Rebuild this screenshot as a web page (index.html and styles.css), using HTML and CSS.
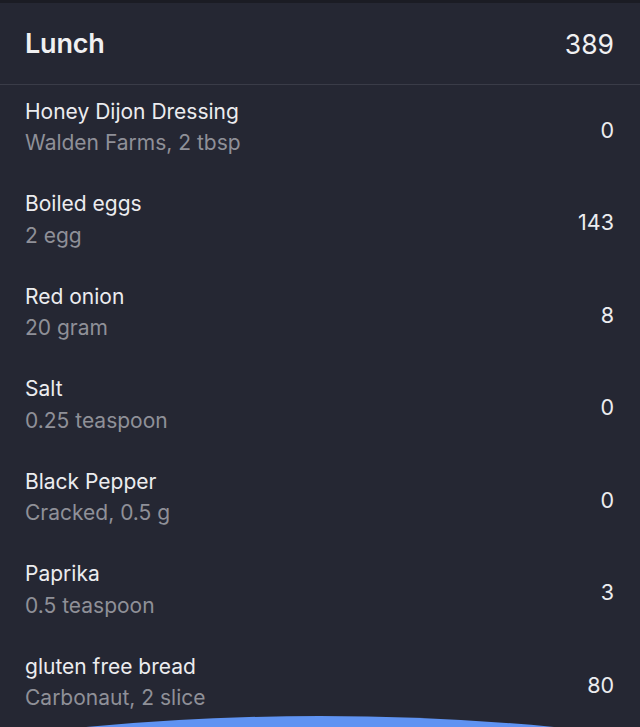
FILE: index.html
```html
<!DOCTYPE html>
<html>
<head>
<meta charset="utf-8">
<link rel="stylesheet" href="styles.css">
</head>
<body>
<div class="screen">
  <div class="topstrip"></div>
  <header class="meal-header">
    <span class="meal-title">Lunch</span>
    <span class="meal-total">389</span>
  </header>
  <ul class="items">
    <li class="item"><div class="info"><div class="name">Honey Dijon Dressing</div><div class="sub">Walden Farms, 2 tbsp</div></div><div class="cal">0</div></li>
    <li class="item"><div class="info"><div class="name">Boiled eggs</div><div class="sub">2 egg</div></div><div class="cal">143</div></li>
    <li class="item"><div class="info"><div class="name">Red onion</div><div class="sub">20 gram</div></div><div class="cal">8</div></li>
    <li class="item"><div class="info"><div class="name">Salt</div><div class="sub">0.25 teaspoon</div></div><div class="cal">0</div></li>
    <li class="item"><div class="info"><div class="name">Black Pepper</div><div class="sub">Cracked, 0.5 g</div></div><div class="cal">0</div></li>
    <li class="item"><div class="info"><div class="name">Paprika</div><div class="sub">0.5 teaspoon</div></div><div class="cal">3</div></li>
    <li class="item"><div class="info"><div class="name">gluten free bread</div><div class="sub">Carbonaut, 2 slice</div></div><div class="cal">80</div></li>
  </ul>
  <svg class="fab-arc" width="640" height="12" viewBox="0 0 640 12"><path d="M86,12 Q320,-10 554,12 Z" fill="#5f93f2"/></svg>
</div>
</body>
</html>
```
FILE: styles.css
```css
* { box-sizing: border-box; }
html, body { margin: 0; padding: 0; background: #252733; }
body { font-family: Inter, "Noto Sans", sans-serif; color: #ececef; }
.screen { position: relative; width: 640px; height: 727px; overflow: hidden; background: #252733; }
.topstrip { height: 3px; background: #1b1c24; }
.meal-header {
  height: 82px;
  display: flex;
  align-items: center;
  justify-content: space-between;
  padding: 0 26px 0 25px;
  border-bottom: 1px solid #3a3c48;
}
.meal-title { font-size: 27px; font-weight: 600; letter-spacing: -0.2px; color: #f0f0f2; }
.meal-total { font-size: 26.5px; font-weight: 400; color: #f0f0f2; padding-top: 1px; }
.items { list-style: none; margin: 0; padding: 0; }
.item {
  height: 92.5px;
  display: flex;
  align-items: center;
  justify-content: space-between;
  padding: 11px 26px 19px 25px;
}
.info { display: flex; flex-direction: column; }
.name { font-size: 21px; line-height: 31.5px; color: #ececef; }
.sub { font-size: 21px; line-height: 31.5px; color: #8f9098; }
.cal { font-size: 21.5px; color: #ececef; padding-top: 5px; }
.fab-arc { position: absolute; left: 0; bottom: 0; display: block; }
```
